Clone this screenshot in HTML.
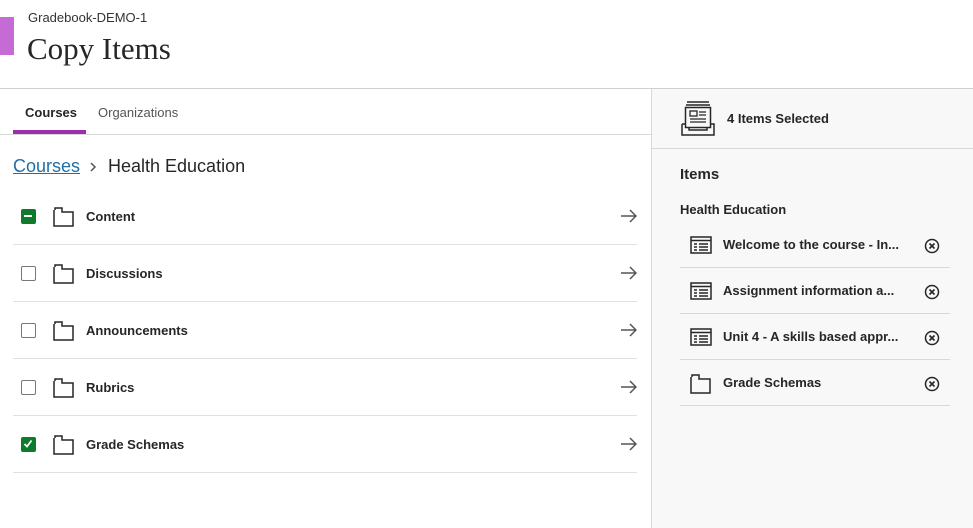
<!DOCTYPE html><html><head><style>
*{margin:0;padding:0;box-sizing:border-box}
body{width:973px;height:528px;overflow:hidden;background:#fff;font-family:"Liberation Sans",sans-serif;color:#262626;position:relative}
.a{position:absolute}
.row{position:absolute;left:13px;width:624px;height:57px;border-bottom:1px solid #e0e0e0}
.row .cb{position:absolute;left:8px;top:21px;width:15px;height:15px;border:1.5px solid #777;border-radius:2px;background:#fff}
.row .cb.g{background:#0d7a2c;border-color:#0d7a2c}
.row svg.f{position:absolute;left:40px;top:19px}
.row .t{position:absolute;left:73px;top:21px;font-size:13px;font-weight:bold;color:#262626}
.row svg.ar{position:absolute;right:0;top:21px}
.it{position:absolute;left:680px;width:270px;height:46px;border-bottom:1px solid #d8d8d8}
.it svg.i{position:absolute;left:10px;top:14px}
.it .t{position:absolute;left:43px;top:15px;font-size:13px;font-weight:bold;color:#262626}
.it svg.x{position:absolute;right:10px;top:16px}
</style></head><body>
<div class="a" style="left:0;top:17px;width:14px;height:38px;background:#c46bd6"></div>
<div class="a" style="left:28px;top:10px;font-size:13px;color:#333">Gradebook-DEMO-1</div>
<div class="a" style="left:27px;top:31px;font-family:'Liberation Serif',serif;font-size:31px;color:#262626">Copy Items</div>
<div class="a" style="left:0;top:88px;width:973px;height:1px;background:#cfcfcf"></div>
<div class="a" style="left:651px;top:89px;width:322px;height:439px;background:#f8f8f8;border-left:1px solid #d8d8d8"></div>
<div class="a" style="left:0;top:134px;width:651px;height:1px;background:#d8d8d8"></div>
<div class="a" style="left:25px;top:105px;font-size:13px;font-weight:bold;color:#262626">Courses</div>
<div class="a" style="left:98px;top:105px;font-size:13px;color:#555">Organizations</div>
<div class="a" style="left:13px;top:130px;width:73px;height:4px;background:#9b2fae"></div>
<div class="a" style="left:13px;top:156px;font-size:18px;color:#1f6fa8;text-decoration:underline">Courses</div>
<svg class="a" style="left:89px;top:162px" width="8" height="10"><path d="M2 1L6 5L2 9" fill="none" stroke="#555" stroke-width="1.5"/></svg>
<div class="a" style="left:108px;top:156px;font-size:18px;color:#262626">Health Education</div>

<div class="row" style="top:188px"><div class="cb g"><div style="position:absolute;left:2px;top:5px;width:8px;height:2px;background:#fff"></div></div><svg class="f" width="22" height="20"><path d="M1 3V19H20V5H9V1H2V3" fill="none" stroke="#262626" stroke-width="1.5"/></svg><div class="t">Content</div><svg class="ar" width="16" height="14"><path d="M0 7H15M9 1L15 7L9 13" fill="none" stroke="#555" stroke-width="1.5"/></svg></div>
<div class="row" style="top:245px"><div class="cb"></div><svg class="f" width="22" height="20"><path d="M1 3V19H20V5H9V1H2V3" fill="none" stroke="#262626" stroke-width="1.5"/></svg><div class="t">Discussions</div><svg class="ar" width="16" height="14"><path d="M0 7H15M9 1L15 7L9 13" fill="none" stroke="#555" stroke-width="1.5"/></svg></div>
<div class="row" style="top:302px"><div class="cb"></div><svg class="f" width="22" height="20"><path d="M1 3V19H20V5H9V1H2V3" fill="none" stroke="#262626" stroke-width="1.5"/></svg><div class="t">Announcements</div><svg class="ar" width="16" height="14"><path d="M0 7H15M9 1L15 7L9 13" fill="none" stroke="#555" stroke-width="1.5"/></svg></div>
<div class="row" style="top:359px"><div class="cb"></div><svg class="f" width="22" height="20"><path d="M1 3V19H20V5H9V1H2V3" fill="none" stroke="#262626" stroke-width="1.5"/></svg><div class="t">Rubrics</div><svg class="ar" width="16" height="14"><path d="M0 7H15M9 1L15 7L9 13" fill="none" stroke="#555" stroke-width="1.5"/></svg></div>
<div class="row" style="top:416px"><div class="cb g"><svg width="12" height="12" style="position:absolute;left:0;top:0"><path d="M2.5 6L5 8.5L9.5 2.5" fill="none" stroke="#fff" stroke-width="1.8"/></svg></div><svg class="f" width="22" height="20"><path d="M1 3V19H20V5H9V1H2V3" fill="none" stroke="#262626" stroke-width="1.5"/></svg><div class="t">Grade Schemas</div><svg class="ar" width="16" height="14"><path d="M0 7H15M9 1L15 7L9 13" fill="none" stroke="#555" stroke-width="1.5"/></svg></div>

<svg class="a" style="left:681px;top:100px" width="34" height="38"><path d="M6 2H28M5 5H29" stroke="#262626" stroke-width="1.5"/><rect x="4.5" y="7.5" width="25" height="20" fill="none" stroke="#262626" stroke-width="1.5"/><rect x="9" y="11" width="7" height="5" fill="none" stroke="#262626" stroke-width="1.3"/><path d="M18 12H25M18 15H25M9 19H25M9 22H25" stroke="#262626" stroke-width="1.3"/><path d="M1 24V35H33V24H29M1 24H5M8 27V30H26V27" fill="none" stroke="#262626" stroke-width="1.5"/></svg>
<div class="a" style="left:727px;top:111px;font-size:13px;font-weight:bold;color:#262626">4 Items Selected</div>
<div class="a" style="left:652px;top:148px;width:321px;height:1px;background:#d8d8d8"></div>
<div class="a" style="left:680px;top:166px;font-size:15px;font-weight:bold;color:#262626">Items</div>
<div class="a" style="left:680px;top:202px;font-size:13px;font-weight:bold;color:#262626">Health Education</div>

<div class="it" style="top:222px"><svg class="i" width="22" height="18"><rect x="1" y="1" width="20" height="16" fill="none" stroke="#262626" stroke-width="1.5"/><path d="M1 4.5H21M4 8H7M9 8H18M4 11H7M9 11H18M4 14H7M9 14H18" stroke="#262626" stroke-width="1.5"/></svg><div class="t">Welcome to the course - In...</div><svg class="x" width="16" height="16"><circle cx="8" cy="8" r="6.5" fill="none" stroke="#262626" stroke-width="1.5"/><path d="M5.5 5.5L10.5 10.5M10.5 5.5L5.5 10.5" stroke="#262626" stroke-width="1.6"/></svg></div>
<div class="it" style="top:268px"><svg class="i" width="22" height="18"><rect x="1" y="1" width="20" height="16" fill="none" stroke="#262626" stroke-width="1.5"/><path d="M1 4.5H21M4 8H7M9 8H18M4 11H7M9 11H18M4 14H7M9 14H18" stroke="#262626" stroke-width="1.5"/></svg><div class="t">Assignment information a...</div><svg class="x" width="16" height="16"><circle cx="8" cy="8" r="6.5" fill="none" stroke="#262626" stroke-width="1.5"/><path d="M5.5 5.5L10.5 10.5M10.5 5.5L5.5 10.5" stroke="#262626" stroke-width="1.6"/></svg></div>
<div class="it" style="top:314px"><svg class="i" width="22" height="18"><rect x="1" y="1" width="20" height="16" fill="none" stroke="#262626" stroke-width="1.5"/><path d="M1 4.5H21M4 8H7M9 8H18M4 11H7M9 11H18M4 14H7M9 14H18" stroke="#262626" stroke-width="1.5"/></svg><div class="t">Unit 4 - A skills based appr...</div><svg class="x" width="16" height="16"><circle cx="8" cy="8" r="6.5" fill="none" stroke="#262626" stroke-width="1.5"/><path d="M5.5 5.5L10.5 10.5M10.5 5.5L5.5 10.5" stroke="#262626" stroke-width="1.6"/></svg></div>
<div class="it" style="top:360px"><svg class="i" width="22" height="20"><path d="M1 3V19H20V5H9V1H2V3" fill="none" stroke="#262626" stroke-width="1.5"/></svg><div class="t">Grade Schemas</div><svg class="x" width="16" height="16"><circle cx="8" cy="8" r="6.5" fill="none" stroke="#262626" stroke-width="1.5"/><path d="M5.5 5.5L10.5 10.5M10.5 5.5L5.5 10.5" stroke="#262626" stroke-width="1.6"/></svg></div>
</body></html>
